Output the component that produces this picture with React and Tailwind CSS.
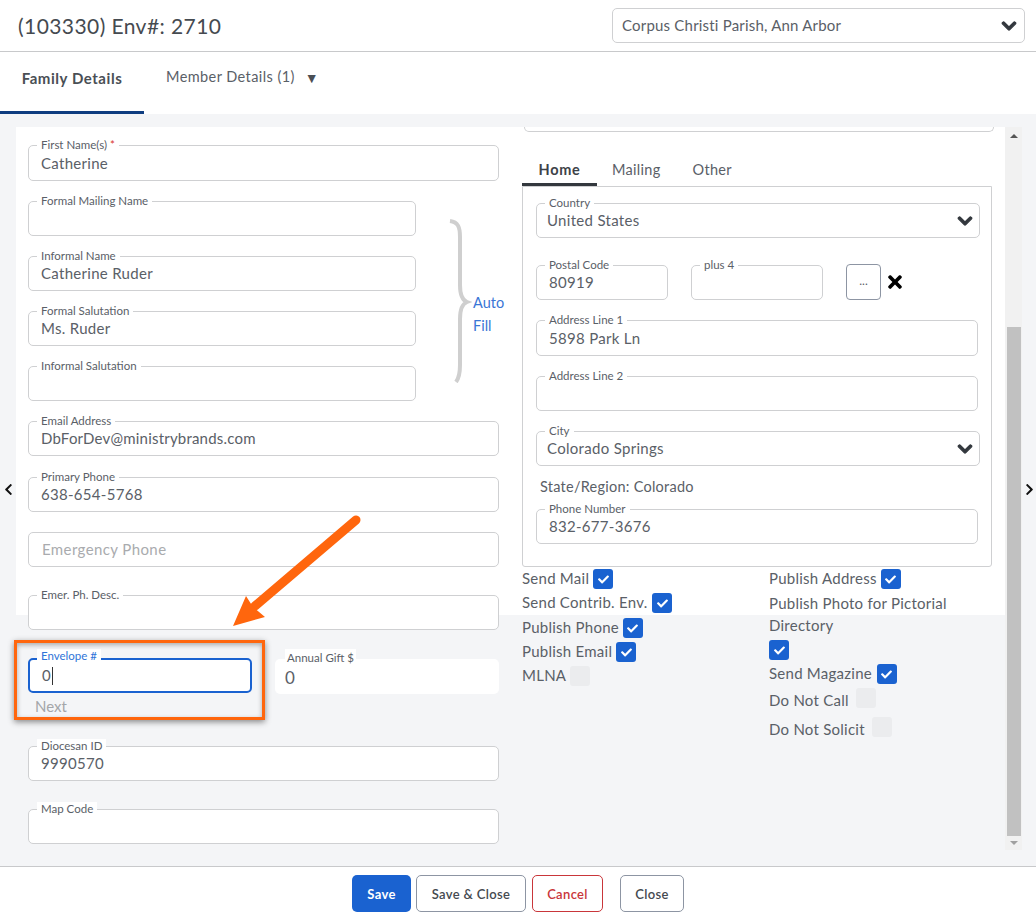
import { FaCheck, FaChevronDown, FaChevronLeft, FaChevronRight, FaTimes } from "react-icons/fa";

const Field = ({ label, value, required, placeholder, focused, className = "", padding = "px-[12px]", children }) => (
    <div className={`relative h-[35px] rounded-[5px] bg-white ${focused ? "border-2 border-[#1a62d0]" : "border border-[#cfd0d2]"} ${className}`}>
        {label && (
            <span className={`absolute ${focused ? "left-[7px] -top-[11px] text-[#2f74d8]" : "left-[8px] -top-[8px] text-[#5a6067]"} bg-white px-[4px] text-[11.5px] leading-[14px] whitespace-nowrap`}>
                {label}
                {required && <span className="text-[#d9342b]"> *</span>}
            </span>
        )}
        <div className={`flex h-full items-center ${padding} text-[15px] tracking-[0.3px] text-[#5a6067]`}>
            {value}
            {placeholder && <span className="pl-[1px] tracking-[0.4px] text-[#a9abae]">{placeholder}</span>}
            {children}
        </div>
    </div>
);

const SelectField = ({ label, value, className = "" }) => (
    <Field label={label} value={value} className={className} padding="px-[10px]">
        <FaChevronDown className="ml-auto -mr-[4px] size-[16px] stroke-current stroke-[40] text-[#33383e]" />
    </Field>
);

const Check = ({ on }) => (
    <span className={`flex size-[20px] shrink-0 items-center justify-center rounded-[3px] ${on ? "bg-[#1a62d0]" : "bg-[#ebecee]"}`}>
        {on && <FaCheck className="size-[11px] text-white" />}
    </span>
);

const CheckRow = ({ label, on, gap = "gap-[5px]", className = "h-[24px]", labelClass = "pb-[1px]" }) => (
    <div className={`flex items-center ${gap} ${className}`}>
        <span className={`whitespace-nowrap ${labelClass}`}>{label}</span>
        <Check on={on} />
    </div>
);

export default function App() {
    return (
        <div className="relative flex h-[917px] w-[1036px] flex-col overflow-hidden bg-white font-['Lato',sans-serif] text-[#5a6067]">
            {/* Header */}
            <header className="flex h-[52px] items-center justify-between border-b border-[#c8c9cb] pr-[11px] pl-[18px]">
                <h1 className="text-[21px] tracking-[0.42px] text-[#454a50]">(103330) Env#: 2710</h1>
                <div className="flex h-[35px] w-[413px] items-center justify-between rounded-[5px] border border-[#cfd0d2] pr-[7px] pl-[9px] text-[15px] tracking-[0.2px]">
                    Corpus Christi Parish, Ann Arbor
                    <FaChevronDown className="size-[16px] stroke-current stroke-[40] text-[#33383e]" />
                </div>
            </header>

            {/* Tabs */}
            <nav className="flex h-[62px] items-start">
                <div className="flex h-[62px] w-[144px] items-center justify-center border-b-[3px] border-[#0f3d80] pb-[6px] text-[15px] font-bold tracking-[0.55px] text-[#4a4f55]">
                    Family Details
                </div>
                <div className="ml-[22px] flex h-[50px] items-center gap-[10px] text-[14.5px] tracking-[0.42px]">
                    Member Details (1)
                    <span className="text-[14px] text-[#4a4f55]">▼</span>
                </div>
            </nav>

            {/* Body */}
            <main className="flex h-[752px] bg-[#f4f5f7] pt-[13px]">
                <div className="flex w-[16px] items-center justify-center pb-[14px] text-[#111]">
                    <FaChevronLeft className="size-[13px]" />
                </div>

                <div className="h-[488px] w-[989px] bg-white">
                    <div className="flex">
                        {/* Left column */}
                        <section className="ml-[12px] w-[471px] pt-[18px]">
                            <Field label="First Name(s)" required value="Catherine" className="h-[36px]" />
                            <div className="mt-[20px] flex">
                                <div className="flex w-[388px] shrink-0 flex-col gap-[20px]">
                                    <Field label="Formal Mailing Name" />
                                    <Field label="Informal Name" value="Catherine Ruder" />
                                    <Field label="Formal Salutation" value="Ms. Ruder" />
                                    <Field label="Informal Salutation" />
                                </div>
                                <svg width="24" height="164" viewBox="0 0 24 164" fill="none" className="mt-[18px] ml-[32px] shrink-0">
                                    <path d="M2 2 C10 3 12 8 12 18 L12 66 C12 76 14 81 19 83 C14 85 12 90 12 100 L12 146 C12 154 11 159 8 163" stroke="#cfcfcf" strokeWidth="4" />
                                </svg>
                                <div className="mt-[90px] ml-[1px] shrink-0 text-[14.5px] leading-[23px] text-[#3a76d6]">
                                    <div>Auto</div>
                                    <div>Fill</div>
                                </div>
                            </div>
                            <Field label="Email Address" value={<span className="tracking-[0.2px]">DbForDev@ministrybrands.com</span>} className="mt-[20px]" />
                            <Field label="Primary Phone" value="638-654-5768" className="mt-[21px]" />
                            <Field placeholder="Emergency Phone" className="mt-[20px]" />
                            <Field label="Emer. Ph. Desc." className="mt-[28px]" />

                            <div className="mt-[28px] flex justify-between">
                                <div className="w-[224px]">
                                    <Field label="Envelope #" value="0" focused>
                                        <span className="ml-[1px] h-[18px] w-px bg-[#333]" />
                                    </Field>
                                    <div className="mt-[4px] pl-[7px] text-[15px] leading-[18px] text-[#a4a6a9]">Next</div>
                                </div>
                                <div className="relative mt-[1px] h-[35px] w-[224px] rounded-[5px] bg-white">
                                    <span className="absolute -top-[10px] left-[10px] bg-white px-[2px] text-[11.5px] leading-[17px] text-[#5a6067]">Annual Gift $</span>
                                    <div className="flex h-full items-center px-[10px] pt-[3px] text-[17px]">0</div>
                                </div>
                            </div>

                            <Field label="Diocesan ID" value="9990570" className="mt-[31px]" />
                            <Field label="Map Code" className="mt-[28px]" />
                        </section>

                        {/* Right column */}
                        <section className="ml-[23px] w-[470px]">
                            <div className="-mr-[2px] ml-[2px] h-[5px] rounded-b-[5px] border-x border-b border-[#cfd0d2]" />
                            <div className="mt-[24px] flex h-[30px] items-start text-[14.5px] tracking-[0.3px]">
                                <div className="h-[30px] w-[75px] border-b-[3px] border-[#33383e] pt-[3px] text-center font-bold tracking-[0.7px] text-[#3d4248]">Home</div>
                                <div className="ml-[15px] pt-[3px]">Mailing</div>
                                <div className="ml-[32px] pt-[3px]">Other</div>
                            </div>
                            <div className="h-[381px] rounded-b-[3px] border border-[#cfd0d2] px-[13px]">
                                <SelectField label="Country" value="United States" className="mt-[16px] w-[444px]" />
                                <div className="mt-[27px] flex items-start">
                                    <Field label="Postal Code" value="80919" className="w-[132px]" />
                                    <Field label="plus 4" className="ml-[23px] w-[132px]" />
                                    <div className="ml-[23px] flex h-[36px] w-[35px] -translate-y-px items-center justify-center rounded-[4px] border border-[#8d95a3] pb-[2px] text-[12px]">...</div>
                                    <FaTimes className="mt-[7px] ml-[4px] size-[20px] text-black" />
                                </div>
                                <Field label="Address Line 1" value="5898 Park Ln" className="mt-[19px] h-[36px] w-[442px]" />
                                <Field label="Address Line 2" className="mt-[20px] w-[442px]" />
                                <SelectField label="City" value="Colorado Springs" className="mt-[20px] w-[444px]" />
                                <div className="mt-[12px] pl-[4px] text-[14.5px] leading-[18px] tracking-[0.25px]">State/Region: Colorado</div>
                                <Field label="Phone Number" value="832-677-3676" className="mt-[13px] w-[442px]" />
                            </div>

                            {/* Checkboxes */}
                            <div className="flex text-[15px] tracking-[0.25px]">
                                <div className="w-[247px]">
                                    <CheckRow label="Send Mail" on gap="gap-[4px]" />
                                    <CheckRow label="Send Contrib. Env." on />
                                    <CheckRow label="Publish Phone" on gap="gap-[4px]" className="mt-[1px] h-[24px]" />
                                    <CheckRow label="Publish Email" on gap="gap-[4px]" />
                                    <CheckRow label="MLNA" gap="gap-[4px]" />
                                </div>
                                <div className="w-[223px]">
                                    <CheckRow label="Publish Address" on gap="gap-[4px]" />
                                    <div className="h-[24px] leading-[24px]">Publish Photo for Pictorial</div>
                                    <div className="h-[23px] leading-[21px]">Directory</div>
                                    <div className="flex h-[24px] items-center"><Check on /></div>
                                    <CheckRow label="Send Magazine" on />
                                    <CheckRow label="Do Not Call" gap="gap-[7px]" labelClass="pt-[4px]" />
                                    <CheckRow label="Do Not Solicit" gap="gap-[7px]" className="mt-[5px] h-[24px]" labelClass="pt-[4px]" />
                                </div>
                            </div>
                        </section>
                    </div>
                </div>

                {/* Scrollbar */}
                <div className="flex h-[723px] w-[17px] flex-col items-center bg-[#f1f1f1]">
                    <span className="mt-[7px] size-0 border-x-[4px] border-b-[4px] border-x-transparent border-b-[#555]" />
                    <div className="mt-[189px] h-[509px] w-[14px] bg-[#c1c1c1]" />
                    <span className="mt-[5px] size-0 border-x-[4px] border-t-[4px] border-x-transparent border-t-[#a0a0a0]" />
                </div>

                <div className="flex w-[14px] items-center justify-center pb-[14px] text-[#111]">
                    <FaChevronRight className="size-[13px]" />
                </div>
            </main>

            {/* Footer */}
            <footer className="flex h-[51px] items-start justify-center border-t border-[#c8c9cb] pt-[8px] text-[13px] font-semibold tracking-[0.35px]">
                <button className="h-[37px] w-[59px] rounded-[5px] bg-[#1a62d0] pt-[2px] font-bold text-white">Save</button>
                <button className="ml-[5px] h-[37px] w-[110px] rounded-[5px] border border-[#8d95a3] pt-[2px] text-[#454a50]">Save &amp; Close</button>
                <button className="ml-[6px] h-[37px] w-[71px] rounded-[5px] border border-[#c9363a] pt-[2px] text-[#c9363a]">Cancel</button>
                <button className="ml-[17px] h-[37px] w-[64px] rounded-[5px] border border-[#8d95a3] pt-[2px] text-[#454a50]">Close</button>
            </footer>

            {/* Annotation */}
            <div className="absolute top-[640px] left-[14px] h-[80px] w-[251px] border-[3px] border-[#ff660d] shadow-[0_2px_6px_rgba(0,0,0,0.45),inset_0_2px_5px_rgba(0,0,0,0.3)]" />
            <svg width="150" height="130" viewBox="0 0 150 130" fill="none" className="absolute top-[510px] left-[225px]">
                <path d="M131 10 L30 96" stroke="#ff660d" strokeWidth="9" strokeLinecap="round" />
                <path d="M8 116 L21 86 L28 97 L40 107 Z" fill="#ff660d" />
            </svg>
        </div>
    );
}
